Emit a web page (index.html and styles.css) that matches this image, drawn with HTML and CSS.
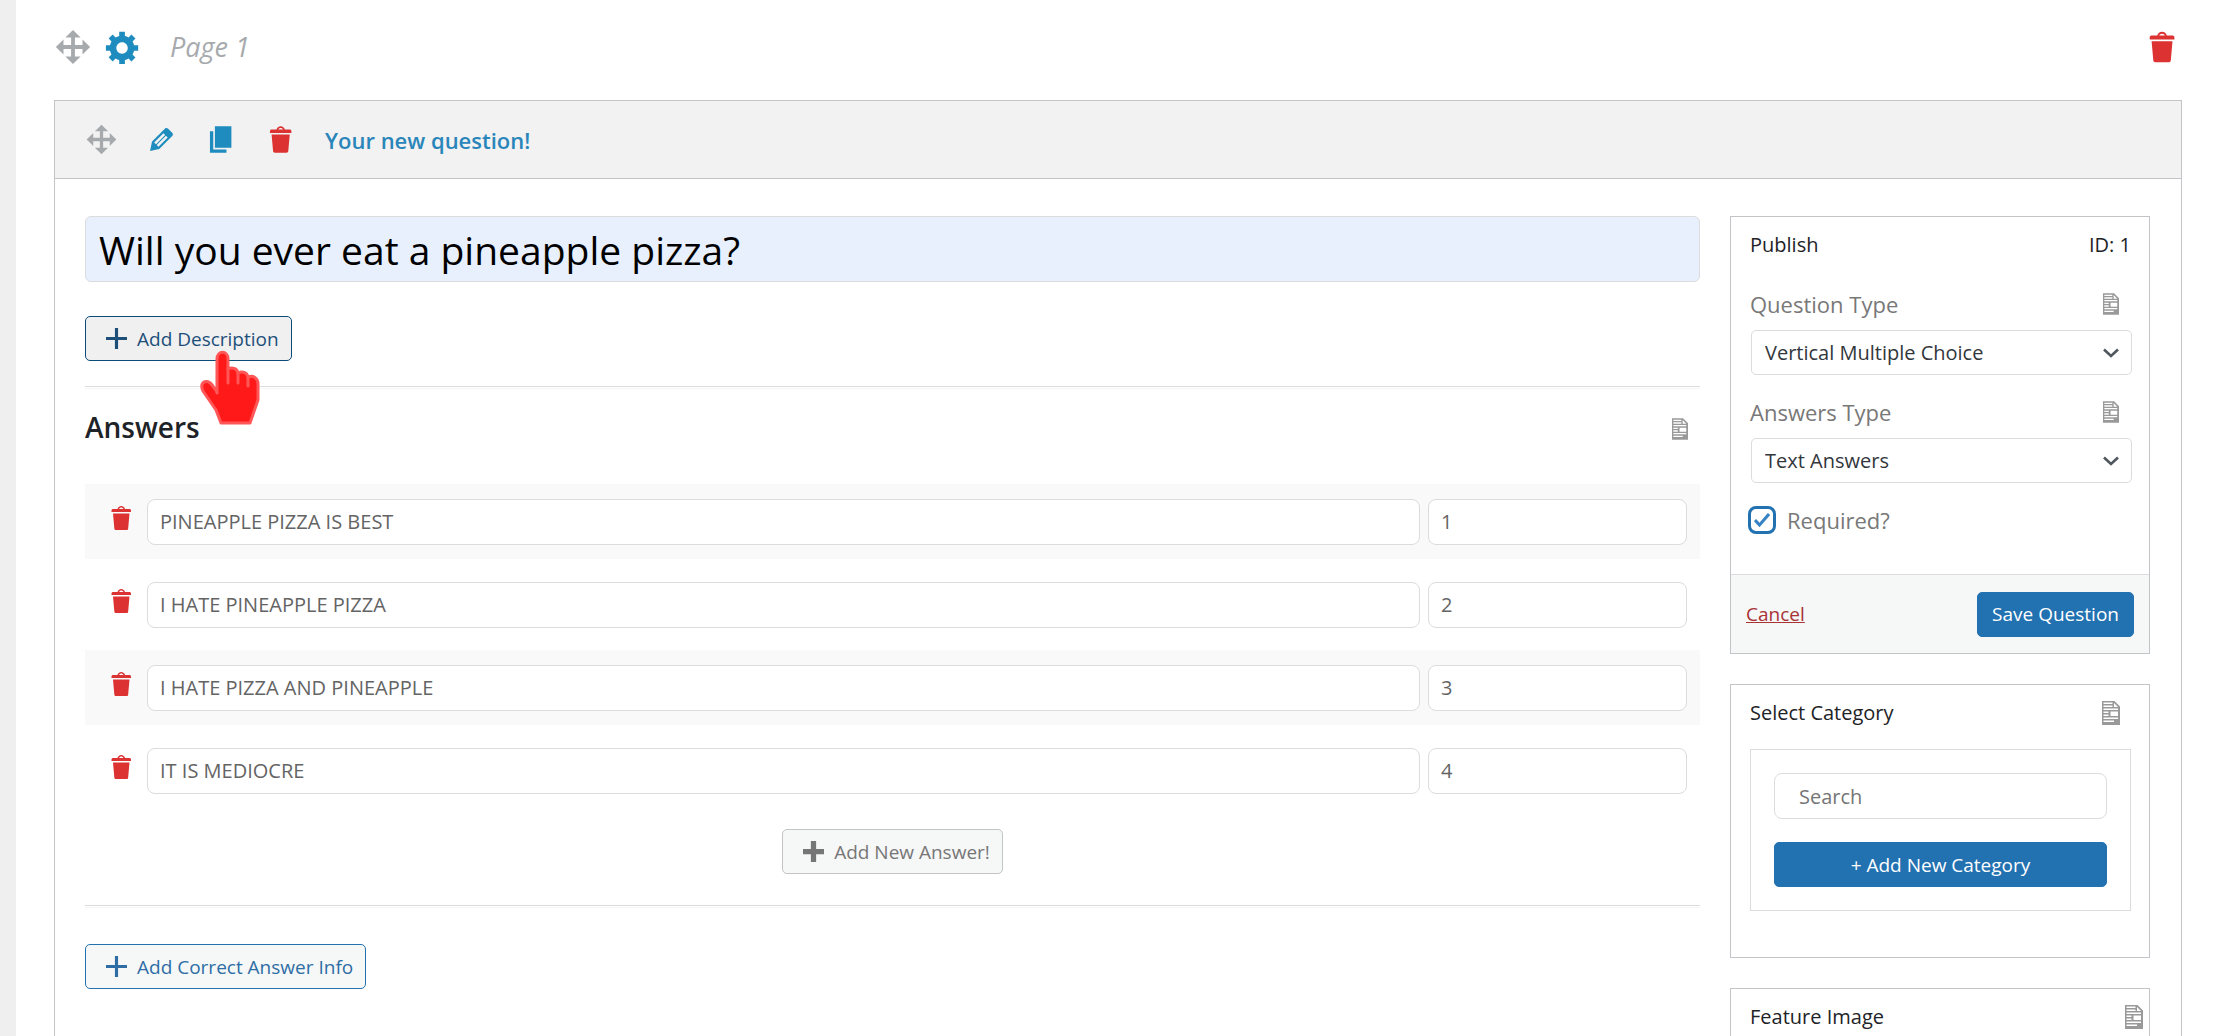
FILE: index.html
```html
<!DOCTYPE html>
<html lang="en">
<head>
<meta charset="utf-8">
<title>Quiz questions</title>
<link rel="stylesheet" href="styles.css">
</head>
<body>
<svg class="sprite" aria-hidden="true">
  <symbol id="move" viewBox="0 0 20 20"><path d="M19 10l-4 4v-3h-4v4h3l-4 4-4-4h3v-4H5v3l-4-4 4-4v3h4V5H6l4-4 4 4h-3v4h4V6z"/></symbol>
  <symbol id="gear" viewBox="0 0 20 20"><path d="M18 12h-2.18c-.17.7-.44 1.35-.81 1.93l1.54 1.54-2.1 2.1-1.54-1.54c-.58.36-1.23.63-1.91.79V19H8v-2.18c-.68-.16-1.33-.43-1.91-.79l-1.54 1.54-2.12-2.12 1.54-1.54c-.36-.58-.63-1.23-.79-1.91H1V9.03h2.17c.16-.7.44-1.35.8-1.94L2.43 5.55l2.1-2.1 1.54 1.54c.58-.37 1.24-.64 1.93-.81V2h3v2.18c.68.16 1.33.43 1.91.79l1.54-1.54 2.12 2.12-1.54 1.54c.36.59.64 1.24.8 1.94H18V12zm-8.5 1.5c1.66 0 3-1.34 3-3s-1.34-3-3-3-3 1.34-3 3 1.34 3 3 3z"/></symbol>
  <symbol id="edit" viewBox="0 0 20 20"><path d="M13.89 3.39l2.71 2.72c.46.46.42 1.24.03 1.64l-8.01 8.02-5.56 1.16 1.16-5.58s7.6-7.63 7.99-8.03c.39-.39 1.22-.39 1.68.07zm-2.73 2.79l-5.59 5.61 1.11 1.11 5.54-5.65zm-2.97 8.23l5.58-5.6-1.07-1.08-5.59 5.6z"/></symbol>
  <symbol id="copy" viewBox="0 0 20 20"><path d="M6 15V2h10v13H6zm-1 1h8v2H3V5h2v11z"/></symbol>
  <symbol id="trash" viewBox="0 0 20 20"><path d="M12 4h3c.6 0 1 .4 1 1v1H3V5c0-.6.5-1 1-1h3c.2-1.1 1.3-2 2.5-2s2.3.9 2.5 2zM8 4h3c-.2-.6-.9-1-1.5-1S8.2 3.4 8 4zM4 7h11l-.9 10.1c0 .5-.5.9-1 .9H5.9c-.5 0-.9-.4-1-.9L4 7z"/></symbol>
  <symbol id="doc" viewBox="0 0 18 24"><path fill-rule="evenodd" d="M0 0h12.500L18 5.500V24H0zM1.500 1.500v1.500h9V1.500zM12 2v4h4zM1.500 4.500V6h9V4.500zM1.500 7.500v1.500h14.500v-1.500zM1.500 10.500V12h5v-1.500zM8.500 10.500v4.500H16v-4.500zM1.500 13.500V15h5v-1.500zM1.500 16.500V18H16v-1.500zM1.500 19.500V21h10.500v-1.500z"/></symbol>
  <symbol id="plus" viewBox="0 0 20 20"><path d="M8.500 0h3v8.500H20v3h-8.500V20h-3v-8.500H0v-3h8.500z"/></symbol>
  <symbol id="plus-bold" viewBox="0 0 20 20"><path d="M7.500 0h5v7.500H20v5h-7.500V20h-5v-7.500H0v-5h7.500z"/></symbol>
  <symbol id="chevron" viewBox="0 0 16 10"><path d="M1 1.500l7 6.500 7-6.500" fill="none" stroke="currentColor" stroke-width="2.600"/></symbol>
</svg>

<main class="page">
  <header class="page-head">
    <button type="button" class="icon-btn grey" aria-label="Move page"><svg><use href="#move"/></svg></button>
    <button type="button" class="icon-btn blue" aria-label="Page settings"><svg><use href="#gear"/></svg></button>
    <span class="page-name">Page 1</span>
    <button type="button" class="icon-btn red" aria-label="Delete page"><svg><use href="#trash"/></svg></button>
  </header>

  <section class="question">
    <header class="question-head">
      <button type="button" class="icon-btn grey" aria-label="Move question"><svg><use href="#move"/></svg></button>
      <button type="button" class="icon-btn blue" aria-label="Edit question"><svg><use href="#edit"/></svg></button>
      <button type="button" class="icon-btn blue" aria-label="Duplicate question"><svg><use href="#copy"/></svg></button>
      <button type="button" class="icon-btn red" aria-label="Delete question"><svg><use href="#trash"/></svg></button>
      <h2>Your new question!</h2>
    </header>

    <div class="question-body">
      <div class="editor">
        <input class="field question-text" type="text" aria-label="Question" value="Will you ever eat a pineapple pizza?">
        <div class="description">
          <button type="button" class="btn btn-outline is-hover"><svg><use href="#plus"/></svg>Add Description</button>
          <svg class="pointer" viewBox="0 0 60 75" aria-hidden="true">
            <path class="hand" d="M21 73L16 60L3 41C0 35 3 31 7 31.500C11 32 12 35 17 42V9C17 0 28 0 28 9V19C32 17 37 18 38 23C42 21 47 22 48 27C53 25 58 28 58 34V50L50 73z"/>
            <path class="fingers" d="M17 42V43M28 18V33M38 23V33M48 27V36"/>
          </svg>
        </div>
        <hr>
        <div class="answers-head">
          <h3>Answers</h3>
          <svg class="doc"><use href="#doc"/></svg>
        </div>
        <ul class="answers">
          <li>
            <button type="button" class="icon-btn red" aria-label="Delete answer 1"><svg><use href="#trash"/></svg></button>
            <input class="field" type="text" aria-label="Answer 1" value="PINEAPPLE PIZZA IS BEST">
            <input class="field points" type="text" aria-label="Points 1" value="1">
          </li>
          <li>
            <button type="button" class="icon-btn red" aria-label="Delete answer 2"><svg><use href="#trash"/></svg></button>
            <input class="field" type="text" aria-label="Answer 2" value="I HATE PINEAPPLE PIZZA">
            <input class="field points" type="text" aria-label="Points 2" value="2">
          </li>
          <li>
            <button type="button" class="icon-btn red" aria-label="Delete answer 3"><svg><use href="#trash"/></svg></button>
            <input class="field" type="text" aria-label="Answer 3" value="I HATE PIZZA AND PINEAPPLE">
            <input class="field points" type="text" aria-label="Points 3" value="3">
          </li>
          <li>
            <button type="button" class="icon-btn red" aria-label="Delete answer 4"><svg><use href="#trash"/></svg></button>
            <input class="field" type="text" aria-label="Answer 4" value="IT IS MEDIOCRE">
            <input class="field points" type="text" aria-label="Points 4" value="4">
          </li>
        </ul>
        <button type="button" class="btn btn-plain"><svg><use href="#plus-bold"/></svg>Add New Answer!</button>
        <hr>
        <button type="button" class="btn btn-outline correct-info"><svg><use href="#plus"/></svg>Add Correct Answer Info</button>
      </div>

      <aside class="side">
        <section class="panel">
          <div class="panel-head"><h4>Publish</h4><span>ID: 1</span></div>
          <div class="panel-fields">
            <div class="label-row"><label for="qtype">Question Type</label><svg class="doc"><use href="#doc"/></svg></div>
            <div class="select">
              <select id="qtype"><option>Vertical Multiple Choice</option></select>
              <svg><use href="#chevron"/></svg>
            </div>
            <div class="label-row"><label for="atype">Answers Type</label><svg class="doc"><use href="#doc"/></svg></div>
            <div class="select">
              <select id="atype"><option>Text Answers</option></select>
              <svg><use href="#chevron"/></svg>
            </div>
            <div class="required">
              <span class="check">
                <input id="required" type="checkbox" checked>
                <svg viewBox="0 0 16 16"><path d="M1 8l4.500 5L15 2"/></svg>
              </span>
              <label for="required">Required?</label>
            </div>
          </div>
          <footer class="panel-foot">
            <a href="#cancel">Cancel</a>
            <button type="button" class="btn btn-primary">Save Question</button>
          </footer>
        </section>

        <section class="panel category">
          <div class="panel-head"><h4>Select Category</h4><svg class="doc large"><use href="#doc"/></svg></div>
          <div class="category-box">
            <input class="field search" type="search" placeholder="Search" aria-label="Search categories">
            <button type="button" class="btn btn-primary">+ Add New Category</button>
          </div>
        </section>

        <section class="panel feature">
          <div class="panel-head"><h4>Feature Image</h4><svg class="doc large"><use href="#doc"/></svg></div>
        </section>
      </aside>
    </div>
  </section>
</main>
</body>
</html>
```
FILE: styles.css
```css
* { box-sizing: border-box; }

body {
  margin: 0;
  background: #fff;
  color: #1d2327;
  font: 20px/28px "Open Sans", "Noto Sans", sans-serif;
}

h2, h3, h4, ul { margin: 0; padding: 0; font-weight: 600; }
h4 { font-size: 20px; font-weight: 500; }
button, input, select { font: inherit; color: inherit; margin: 0; }
svg { display: block; fill: currentColor; }
.sprite { position: absolute; width: 0; height: 0; }

.page {
  display: flex;
  flex-direction: column;
  height: 100vh;
  overflow: hidden;
  padding: 0 32px 0 38px;
  border-left: 16px solid #efefef;
}

.icon-btn { padding: 0; border: 0; background: none; }
.icon-btn svg { width: 33px; height: 33px; }
.grey { color: #a7aaad; }
.blue { color: #1e8cbe; }
.red { color: #dc3232; }

.page-head {
  display: flex;
  flex: none;
  align-items: center;
  gap: 12px;
  height: 100px;
  padding-bottom: 6px;
}
.page-head .icon-btn svg { width: 38px; height: 38px; }
.page-name {
  flex: 1;
  padding-left: 16px;
  color: #a7aaad;
  font-size: 27px;
  font-style: italic;
}

.question {
  flex: 1 0 auto;
  border: 1px solid #c3c4c7;
}
.question-head {
  display: flex;
  align-items: center;
  gap: 27px;
  height: 78px;
  padding: 0 30px;
  border-bottom: 1px solid #c3c4c7;
  background: #f2f2f2;
}
.question-head h2 { color: #2a86ba; font-size: 22px; }

.question-body {
  display: flex;
  align-items: flex-start;
  gap: 30px;
  padding: 37px 31px 0 30px;
}
.editor {
  display: flex;
  flex: 1;
  flex-direction: column;
  align-items: flex-start;
}

.field {
  width: 100%;
  min-width: 0;
  height: 46px;
  padding: 0 12px;
  border: 1px solid #dcdcde;
  border-radius: 8px;
  background: #fff;
  color: #646464;
}
.question-text {
  height: 66px;
  padding: 0 13px;
  border-radius: 6px;
  background: #e8f0fe;
  color: #000;
  font-size: 39px;
}

.btn {
  display: flex;
  align-items: center;
  justify-content: center;
  gap: 10px;
  height: 45px;
  padding: 0 12px 0 20px;
  border: 1px solid;
  border-radius: 5px;
  font-size: 19px;
}
.btn svg { width: 21px; height: 21px; }
.btn-outline { border-color: #2271b1; background: #f6f7f7; color: #2e6ea5; }
.btn-outline.is-hover { border-color: #0a4b78; background: #f0f0f1; color: #1d4f79; }
.btn-plain { align-self: center; border-color: #c3c4c7; background: #f6f7f7; color: #767676; }
.btn-primary { padding: 0 14px; border-color: #2271b1; background: #2271b1; color: #fff; }

.description { position: relative; margin: 34px 0 25px; }
.pointer {
  position: absolute;
  left: 115px;
  top: 34px;
  width: 60px;
  height: 75px;
}
.hand { fill: #ff1919; stroke: #ff5757; stroke-width: 3; stroke-linejoin: round; }
.fingers { fill: none; stroke: #ff5757; stroke-width: 3; stroke-linecap: round; }

hr {
  width: 100%;
  height: 3px;
  margin: 0;
  border: 0;
  border-top: 1px solid #dcdcde;
  border-bottom: 1px solid #f6f6f6;
}

.doc { width: 16px; height: 22px; color: #999; }
.doc.large { width: 18px; height: 24px; }

.answers-head {
  display: flex;
  align-items: center;
  justify-content: space-between;
  width: 100%;
  height: 80px;
  margin-bottom: 15px;
  padding-right: 12px;
}
.answers-head h3 { padding-bottom: 4px; font-size: 28px; }

.answers {
  display: grid;
  gap: 8px;
  width: 100%;
  list-style: none;
  font-weight: 400;
}
.answers li {
  display: grid;
  grid-template-columns: 32px 1fr 259px;
  align-items: center;
  height: 75px;
  padding: 0 13px 0 22px;
  column-gap: 8px;
}
.answers li:nth-child(odd) { background: #f9f9f9; }
.answers .icon-btn { padding: 0 2px 8px 0; }
.answers .icon-btn svg { width: 30px; height: 30px; }

.btn-plain { margin: 21px 0 31px; }
.correct-info { margin-top: 36px; }

.side { display: flex; flex: none; flex-direction: column; gap: 30px; width: 420px; }
.panel { border: 1px solid #c3c4c7; }
.panel-head {
  display: flex;
  align-items: center;
  justify-content: space-between;
  height: 56px;
  padding: 0 18px 0 19px;
  font-weight: 500;
}
.panel-fields { padding: 14px 17px 37px 19px; color: #787878; }
.label-row {
  display: flex;
  align-items: center;
  justify-content: space-between;
  height: 34px;
  padding-right: 13px;
  font-size: 22px;
}
.select { display: grid; align-items: center; margin: 9px 0 20px 1px; }
.select select {
  grid-area: 1 / 1;
  width: 100%;
  height: 45px;
  padding: 0 13px;
  border: 1px solid #dcdcde;
  border-radius: 5px;
  background: #fff;
  color: #32373c;
  appearance: none;
}
.select svg {
  grid-area: 1 / 1;
  justify-self: end;
  width: 16px;
  height: 10px;
  margin-right: 13px;
  color: #50575e;
  pointer-events: none;
}

.required {
  display: flex;
  align-items: center;
  gap: 11px;
  height: 34px;
  margin-left: -2px;
  font-size: 22px;
}
.check { display: grid; place-items: center; }
.check input {
  grid-area: 1 / 1;
  width: 28px;
  height: 28px;
  border: 3px solid #2271b1;
  border-radius: 8px;
  background: #fff;
  appearance: none;
}
.check svg { grid-area: 1 / 1; width: 16px; height: 16px; pointer-events: none; }
.check path { fill: none; stroke: #3582c4; stroke-width: 3; }

.panel-foot {
  display: flex;
  align-items: center;
  justify-content: space-between;
  height: 79px;
  padding: 0 15px;
  border-top: 1px solid #dcdcde;
  background: #f6f7f7;
}
.panel-foot a { color: #a83236; font-size: 19px; }

.category .panel-head { padding-right: 29px; }
.category-box {
  display: grid;
  gap: 23px;
  margin: 8px 18px 46px 19px;
  padding: 23px;
  border: 1px solid #dcdcde;
}
.search { padding: 0 24px; }
.search::placeholder { color: #757575; opacity: 1; }
.feature { height: 300px; }
.feature .panel-head { padding-right: 6px; }
```
